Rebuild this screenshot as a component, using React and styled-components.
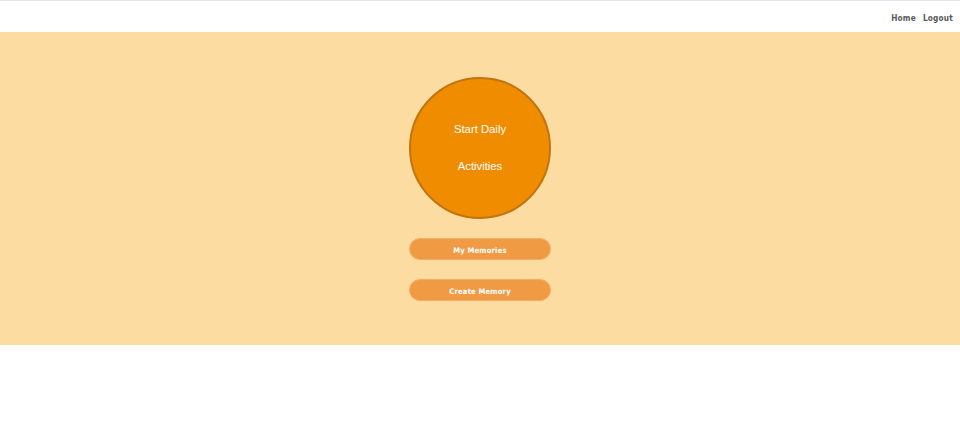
import React from "react";
import styled, { createGlobalStyle } from "styled-components";

const Global = createGlobalStyle`
  html, body { margin: 0; padding: 0; background: #fff; }
  body { font-family: "Liberation Sans", Arial, sans-serif; }
`;

const Page = styled.div`
  border-top: 1px solid #e6e6e6;
`;

const Header = styled.header`
  height: 31px;
  display: flex;
  justify-content: flex-end;
  align-items: center;
  padding-right: 7px;
  gap: 7px;
  background: #fff;
`;

const NavLink = styled.a`
  font-family: "DejaVu Sans Condensed", "DejaVu Sans", sans-serif;
  font-weight: bold;
  font-size: 8.2px;
  letter-spacing: 0.2px;
  color: #5a5a5a;
  text-decoration: none;
  padding-top: 2px;
`;

const Band = styled.main`
  background: #fddca2;
  height: 313px;
  display: flex;
  flex-direction: column;
  align-items: center;
  padding-top: 45px;
  box-sizing: border-box;
`;

const Circle = styled.button`
  width: 142px;
  height: 142px;
  border-radius: 50%;
  background: #f08c00;
  border: 2px solid #c27410;
  box-sizing: border-box;
  color: #fff;
  font-family: "Liberation Sans", Arial, sans-serif;
  font-size: 11.3px;
  display: flex;
  flex-direction: column;
  align-items: center;
  justify-content: center;
  gap: 23px;
  padding: 0 0 2px;
  cursor: pointer;
`;

const Line = styled.span`
  display: block;
  line-height: 14px;
`;

const Pill = styled.button`
  width: 142px;
  height: 22px;
  border-radius: 11px;
  border: 1px solid #f3ad68;
  box-sizing: border-box;
  background: #f09b43;
  color: #fff;
  font-family: "DejaVu Sans Condensed", "DejaVu Sans", sans-serif;
  font-weight: bold;
  font-size: 7.6px;
  letter-spacing: 0.2px;
  margin-top: ${(p) => p.$mt}px;
  cursor: pointer;
  padding: 2px 0 0;
`;

export default function App() {
  return (
    <Page>
      <Global />
      <Header>
        <NavLink href="#">Home</NavLink>
        <NavLink href="#">Logout</NavLink>
      </Header>
      <Band>
        <Circle>
          <Line>Start Daily</Line>
          <Line>Activities</Line>
        </Circle>
        <Pill $mt={19}>My Memories</Pill>
        <Pill $mt={19}>Create Memory</Pill>
      </Band>
    </Page>
  );
}
